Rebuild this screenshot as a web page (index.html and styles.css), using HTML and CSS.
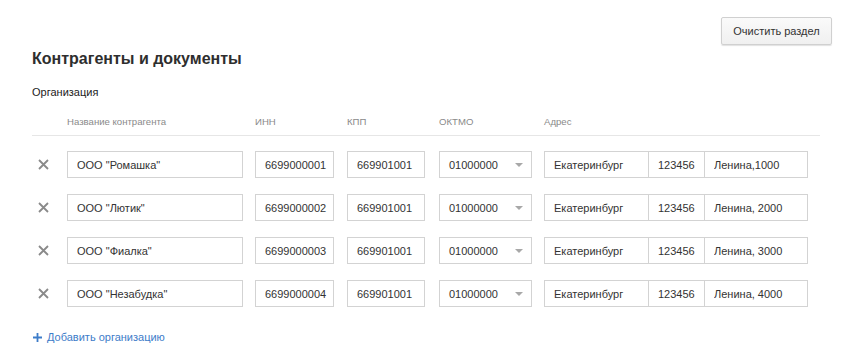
FILE: index.html
```html
<!DOCTYPE html>
<html lang="ru">
<head>
    <meta charset="UTF-8">
    <meta name="viewport" content="width=device-width, initial-scale=1.0">
    <title>Контрагенты и документы</title>
    <link rel="stylesheet" href="styles.css">
</head>
<body>
    <div class="toolbar">
        <button class="btn-clear" type="button">Очистить раздел</button>
    </div>
    <div class="page">
        <h1>Контрагенты и документы</h1>
        <h2>Организация</h2>

        <div class="grid head">
            <span></span>
            <span>Название контрагента</span>
            <span>ИНН</span>
            <span>КПП</span>
            <span>ОКТМО</span>
            <span>Адрес</span>
        </div>

        <div class="rows">
            <div class="grid row">
                <button class="remove" type="button" title="Удалить">
                    <svg width="11" height="11" viewBox="0 0 11 11"><path d="M1 1L10 10M10 1L1 10" stroke="#8a8a8a" stroke-width="1.8"/></svg>
                </button>
                <input class="f-name" type="text" value='ООО "Ромашка"'>
                <input class="f-inn" type="text" value="6699000001">
                <input class="f-kpp" type="text" value="669901001">
                <div class="select"><span>01000000</span><i class="arrow"></i></div>
                <div class="address">
                    <input class="f-city" type="text" value="Екатеринбург">
                    <input class="f-zip" type="text" value="123456">
                    <input class="f-street" type="text" value="Ленина,1000">
                </div>
            </div>
            <div class="grid row">
                <button class="remove" type="button" title="Удалить">
                    <svg width="11" height="11" viewBox="0 0 11 11"><path d="M1 1L10 10M10 1L1 10" stroke="#8a8a8a" stroke-width="1.8"/></svg>
                </button>
                <input class="f-name" type="text" value='ООО "Лютик"'>
                <input class="f-inn" type="text" value="6699000002">
                <input class="f-kpp" type="text" value="669901001">
                <div class="select"><span>01000000</span><i class="arrow"></i></div>
                <div class="address">
                    <input class="f-city" type="text" value="Екатеринбург">
                    <input class="f-zip" type="text" value="123456">
                    <input class="f-street" type="text" value="Ленина, 2000">
                </div>
            </div>
            <div class="grid row">
                <button class="remove" type="button" title="Удалить">
                    <svg width="11" height="11" viewBox="0 0 11 11"><path d="M1 1L10 10M10 1L1 10" stroke="#8a8a8a" stroke-width="1.8"/></svg>
                </button>
                <input class="f-name" type="text" value='ООО "Фиалка"'>
                <input class="f-inn" type="text" value="6699000003">
                <input class="f-kpp" type="text" value="669901001">
                <div class="select"><span>01000000</span><i class="arrow"></i></div>
                <div class="address">
                    <input class="f-city" type="text" value="Екатеринбург">
                    <input class="f-zip" type="text" value="123456">
                    <input class="f-street" type="text" value="Ленина, 3000">
                </div>
            </div>
            <div class="grid row">
                <button class="remove" type="button" title="Удалить">
                    <svg width="11" height="11" viewBox="0 0 11 11"><path d="M1 1L10 10M10 1L1 10" stroke="#8a8a8a" stroke-width="1.8"/></svg>
                </button>
                <input class="f-name" type="text" value='ООО "Незабудка"'>
                <input class="f-inn" type="text" value="6699000004">
                <input class="f-kpp" type="text" value="669901001">
                <div class="select"><span>01000000</span><i class="arrow"></i></div>
                <div class="address">
                    <input class="f-city" type="text" value="Екатеринбург">
                    <input class="f-zip" type="text" value="123456">
                    <input class="f-street" type="text" value="Ленина, 4000">
                </div>
            </div>
        </div>

        <a class="add-link" href="#">
            <svg width="9" height="9" viewBox="0 0 9 9"><path d="M4.5 0V9M0 4.5H9" stroke="#3d7cc9" stroke-width="1.8"/></svg>
            Добавить организацию
        </a>
    </div>
</body>
</html>
```

FILE: styles.css
```css
/* Цвета формы */
:root {
    --text-color: #333333;
    --muted-color: #8a8a8a;
    --border-color: #d3d3d3;
    --line-color: #e6e6e6;
    --link-color: #3d7cc9;
}

* {
    box-sizing: border-box;
}

body {
    margin: 0;
    font-family: "Liberation Sans", Arial, sans-serif;
    color: var(--text-color);
    background: #ffffff;
}

.toolbar {
    display: flex;
    justify-content: flex-end;
    padding: 17px 20px 0 0;
}
.btn-clear {
    width: 111px;
    height: 28px;
    padding: 0;
    font-family: inherit;
    font-size: 11px;
    color: var(--text-color);
    background: linear-gradient(#fafafa, #f0f0f0);
    border: 1px solid #d0d0d0;
    border-radius: 2px;
    box-shadow: 0 1px 1px rgba(0, 0, 0, 0.12);
    cursor: pointer;
}

.page {
    padding: 0 32px;
}
h1 {
    margin: 1px 0 0;
    font-size: 16px;
    line-height: 26px;
    font-weight: 700;
    color: #2e2e2e;
}
h2 {
    margin: 12px 0 0;
    font-size: 11px;
    line-height: 16px;
    font-weight: 400;
    color: #222222;
}

.grid {
    display: grid;
    grid-template-columns: 35px 188px 92px 92px 105px auto;
    align-items: center;
}
.head {
    margin-top: 14px;
    padding-bottom: 5px;
    border-bottom: 1px solid var(--line-color);
    font-size: 9.6px;
    line-height: 16px;
    color: var(--muted-color);
}

.rows {
    display: flex;
    flex-direction: column;
    gap: 16px;
    padding-top: 15px;
}
.row input,
.select {
    height: 27px;
    padding: 0 3px 0 9px;
    font-family: inherit;
    font-size: 11px;
    color: var(--text-color);
    border: 1px solid var(--border-color);
    border-radius: 0;
    background: #ffffff;
    outline: none;
}
.remove {
    width: 22px;
    height: 22px;
    padding: 0;
    display: flex;
    align-items: center;
    justify-content: center;
    border: none;
    background: none;
    cursor: pointer;
}
.f-name { width: 176px; }
.f-inn { width: 79px; }
.f-kpp { width: 78px; }
.select {
    width: 93px;
    display: flex;
    align-items: center;
    justify-content: space-between;
    padding-right: 8px;
}
.arrow {
    width: 0;
    height: 0;
    border-left: 4px solid transparent;
    border-right: 4px solid transparent;
    border-top: 4px solid #a8a8a8;
}
.address {
    display: flex;
}
.address input + input {
    margin-left: -1px;
}
.f-city { width: 105px; }
.f-zip { width: 57px; }
.f-street { width: 104px; }

.add-link {
    display: inline-flex;
    align-items: center;
    gap: 5px;
    margin: 22px 0 0 1px;
    font-size: 11px;
    line-height: 16px;
    color: var(--link-color);
    text-decoration: none;
}
```
